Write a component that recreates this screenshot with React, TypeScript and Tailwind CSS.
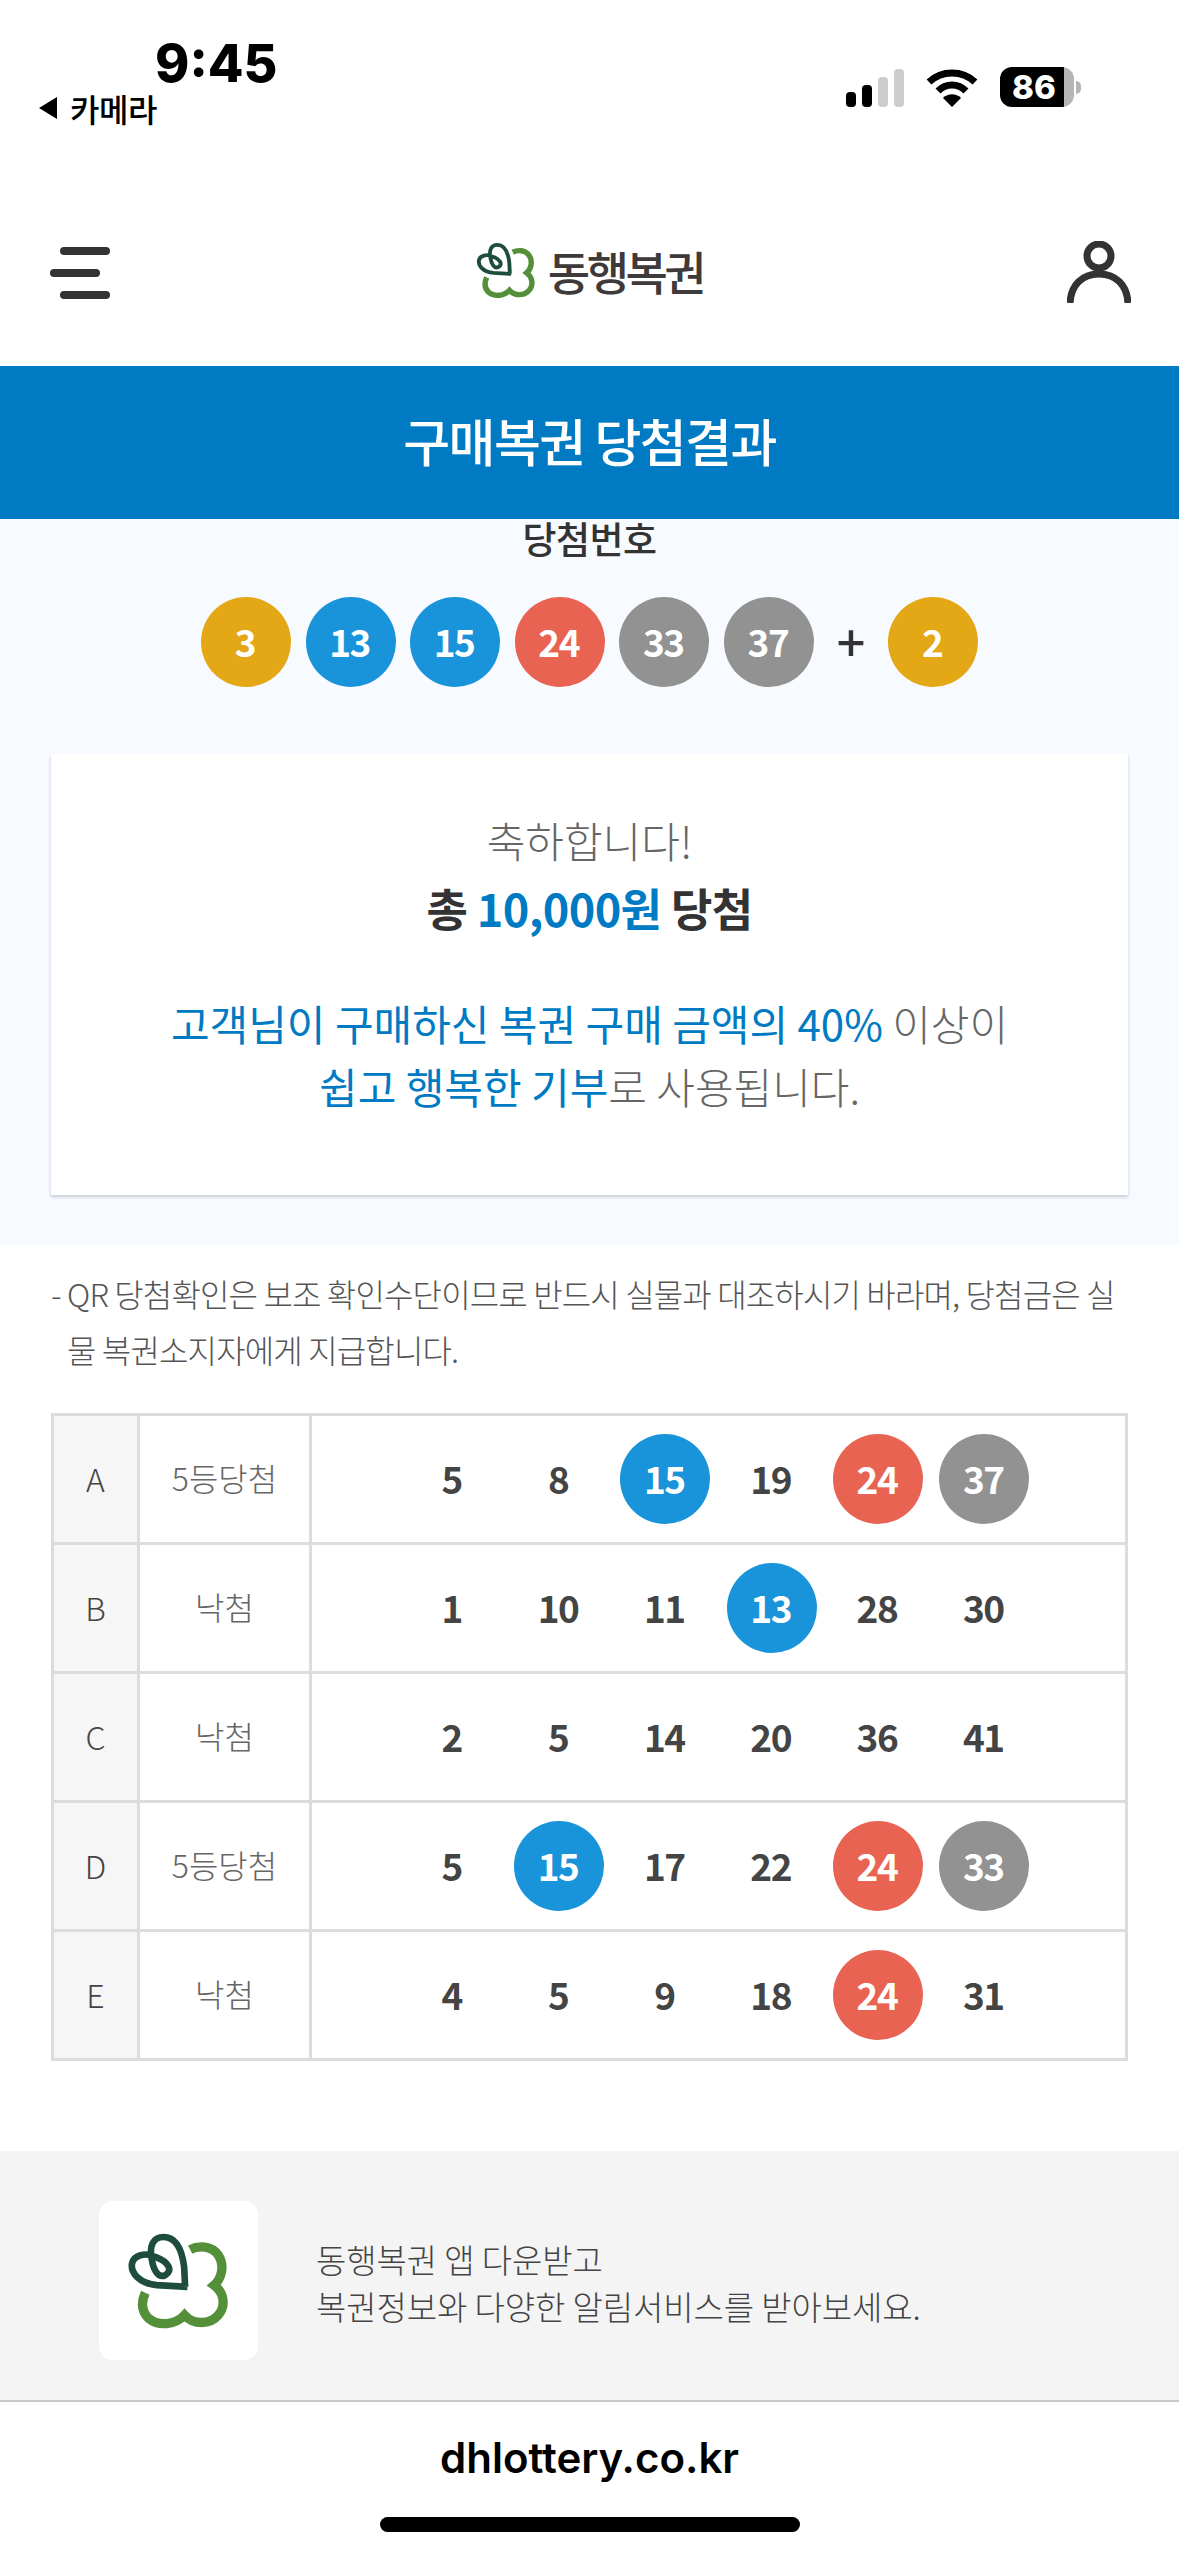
import React from "react";

const KR = "font-['Noto_Sans_CJK_KR','Noto_Sans',sans-serif]";

function Logo({ className }: { className: string }) {
  return (
    <svg viewBox="110 125 310 295" className={className} fill="none">
      <path d="M300 178C325 165 365 165 385 195C405 225 395 265 372 285C400 305 410 345 385 375C360 405 310 405 283 375C255 405 205 410 175 385C150 360 155 330 165 308" stroke="#54903a" strokeWidth="28" />
      <path d="M292 290L200 285C150 280 120 250 125 220C130 195 165 185 195 200C235 215 250 240 225 255C205 265 190 240 185 210C175 165 190 140 220 140C255 140 275 175 282 230L285 290" stroke="#1f4d3d" strokeWidth="20" strokeLinejoin="round" />
    </svg>
  );
}

function Ball({ n, color }: { n: number; color: string }) {
  return (
    <div className={`w-[90px] h-[90px] pr-[2px] rounded-full flex items-center justify-center text-white text-[37px] font-bold tracking-[-1.5px] shrink-0 ${color}`}>
      {n}
    </div>
  );
}

const ballColor = (n: number) =>
  n <= 10 ? "bg-[#e4a716]" : n <= 20 ? "bg-[#1994da]" : n <= 30 ? "bg-[#e96353]" : "bg-[#929292]";

const rows: { id: string; res: string; nums: number[]; hit: number[] }[] = [
  { id: "A", res: "5등당첨", nums: [5, 8, 15, 19, 24, 37], hit: [15, 24, 37] },
  { id: "B", res: "낙첨", nums: [1, 10, 11, 13, 28, 30], hit: [13] },
  { id: "C", res: "낙첨", nums: [2, 5, 14, 20, 36, 41], hit: [] },
  { id: "D", res: "5등당첨", nums: [5, 15, 17, 22, 24, 33], hit: [15, 24, 33] },
  { id: "E", res: "낙첨", nums: [4, 5, 9, 18, 24, 31], hit: [24] },
];

export default function App() {
  return (
    <div className={`w-[1179px] h-[2556px] bg-white overflow-hidden flex flex-col ${KR}`}>
      {/* status bar */}
      <div className="h-[140px] flex justify-between shrink-0">
        <div className="pl-[37px] pt-[36px] flex flex-col">
          <span className="pl-[118px] font-['Inter',sans-serif] font-extrabold text-[52px] leading-[56px] text-black">9:45</span>
          <span className="flex items-center gap-[11px] text-[32px] leading-[36px] font-medium text-black -mt-[2px] tracking-[-0.5px]">
            <svg width="22" height="24" viewBox="0 0 22 24"><path d="M20 1V23L2 12Z" fill="#000" /></svg>
            카메라
          </span>
        </div>
        <div className="pr-[98px] pt-[67px] flex items-start gap-[22px]">
          <svg width="58" height="38" viewBox="0 0 58 38" className="mt-[2px]">
            <rect x="0" y="23" width="10" height="15" rx="4" fill="#000" />
            <rect x="16" y="16" width="10" height="22" rx="4" fill="#000" />
            <rect x="32" y="8" width="10" height="30" rx="4" fill="#cdcdcd" />
            <rect x="48" y="0" width="10" height="38" rx="4" fill="#cdcdcd" />
          </svg>
          <svg width="52" height="38" viewBox="0 0 52 38" className="mt-[2px]">
            <path d="M3 13C16 1 36 1 49 13" stroke="#000" strokeWidth="7" fill="none" />
            <path d="M12 22C20 14 32 14 40 22" stroke="#000" strokeWidth="7" fill="none" />
            <path d="M17 29C22 24 30 24 35 29L26 38Z" fill="#000" />
          </svg>
          <div className="flex items-center">
            <div className="w-[74px] h-[40px] rounded-[12px] bg-[linear-gradient(90deg,#000_0,#000_64px,#b5b5b5_64px)] flex items-center pl-[12px] text-white font-['Inter',sans-serif] font-extrabold text-[33px] leading-none">
              86
            </div>
            <div className="w-[5px] h-[13px] rounded-r-full bg-[#b5b5b5] ml-[2px]" />
          </div>
        </div>
      </div>

      {/* nav */}
      <div className="h-[226px] shrink-0 flex items-start justify-between pt-[101px] pl-[50px] pr-[48px]">
        <div className="flex flex-col gap-[14px] items-start pt-[6px]">
          <div className="w-[50px] h-[8px] rounded-full bg-[#333] ml-[10px]" />
          <div className="w-[50px] h-[8px] rounded-full bg-[#333]" />
          <div className="w-[50px] h-[8px] rounded-full bg-[#333] ml-[10px]" />
        </div>
        <div className="flex items-center gap-[12px] ml-[2px]">
          <Logo className="w-[60px] h-[57px]" />
          <span className="text-[46px] leading-[58px] font-medium text-[#3e3a39] tracking-[-3.5px]">동행복권</span>
        </div>
        <svg width="64" height="62" viewBox="0 0 64 62" fill="none">
          <circle cx="32" cy="15" r="12" stroke="#333" strokeWidth="7" />
          <path d="M3 62C4 44 15 33 32 33C49 33 60 44 61 62" stroke="#333" strokeWidth="7" />
        </svg>
      </div>

      {/* title */}
      <div className="h-[153px] shrink-0 bg-[#007bc3] flex items-center justify-center text-white text-[51px] font-medium tracking-[-1.6px] pb-[4px]">
        구매복권 당첨결과
      </div>

      {/* winning numbers */}
      <div className="h-[726px] shrink-0 bg-[#f7faff] flex flex-col items-center">
        <div className="text-[37px] leading-[44px] font-medium text-[#333] -mt-[3px] mb-[1px] tracking-[-0.5px]">당첨번호</div>
        <div className="mt-[36px] flex items-center gap-[14.6px]">
          {[3, 13, 15, 24, 33, 37].map((n) => (
            <Ball key={n} n={n} color={ballColor(n)} />
          ))}
          <div className="w-[45px] text-center text-[50px] leading-none font-medium text-[#333] -mt-[4px]">+</div>
          <Ball n={2} color={ballColor(2)} />
        </div>
        <div className="mt-[67px] w-[1077px] h-[441px] bg-white shadow-[0_2px_3px_rgba(60,70,90,0.25)] flex flex-col items-center pt-[58px]">
          <div className="text-[42px] leading-[56px] font-light text-[#666]">축하합니다!</div>
          <div className="mt-[11px] text-[45px] leading-[58px] font-bold text-[#333] tracking-[-0.6px]">
            총 <span className="text-[#007bc3]">10,000원</span> 당첨
          </div>
          <div className="mt-[54px] text-[42px] leading-[63px] font-light text-[#666] text-center">
            <span className="text-[#007bc3] font-normal">고객님이 구매하신 복권 구매 금액의 40%</span> 이상이
            <br />
            <span className="text-[#007bc3] font-normal">쉽고 행복한 기부</span>로 사용됩니다.
          </div>
        </div>
      </div>

      {/* note */}
      <div className="pl-[67px] pr-[40px] pt-[20px] pb-[3px] text-[32px] leading-[56px] text-[#555] font-light -indent-[16px] tracking-[-0.85px]">
        - QR 당첨확인은 보조 확인수단이므로 반드시 실물과 대조하시기 바라며, 당첨금은 실
        <br />
        물 복권소지자에게 지급합니다.
      </div>

      {/* table */}
      <div className="mt-[33px] mx-[51px] w-[1077px] shrink-0 border-[3px] border-[#dcdcdc] flex flex-col">
        {rows.map((r, i) => (
          <div key={r.id} className={`flex ${i < rows.length - 1 ? "h-[129px] border-b-[3px] border-[#dcdcdc]" : "h-[126px]"}`}>
            <div className="w-[86px] shrink-0 bg-[#f6f6f6] border-r-[3px] border-[#dcdcdc] flex items-center justify-center text-[32px] font-light text-[#444] pb-[3px]">
              {r.id}
            </div>
            <div className="w-[172px] shrink-0 border-r-[3px] border-[#dcdcdc] flex items-center justify-center text-[32px] font-light text-[#666] pb-[5px]">
              {r.res}
            </div>
            <div className="flex-1 flex items-center justify-center gap-[16.3px]">
              {r.nums.map((n) =>
                r.hit.includes(n) ? (
                  <Ball key={n} n={n} color={ballColor(n)} />
                ) : (
                  <div key={n} className="w-[90px] pr-[2px] text-center text-[37px] font-bold tracking-[-1.5px] text-[#444]">
                    {n}
                  </div>
                )
              )}
            </div>
          </div>
        ))}
      </div>

      {/* footer promo */}
      <div className="mt-[90px] h-[251px] shrink-0 bg-[#f4f4f4] border-b-[2px] border-[#c8c8c8] flex items-center pl-[99px] gap-[58px]">
        <div className="w-[159px] h-[159px] rounded-[14px] bg-white flex items-center justify-center mt-[10px]">
          <Logo className="w-[103px] h-[98px]" />
        </div>
        <div className="text-[33px] leading-[47px] font-light text-[#444] mt-[14px] tracking-[-0.1px]">
          동행복권 앱 다운받고
          <br />
          복권정보와 다양한 알림서비스를 받아보세요.
        </div>
      </div>

      {/* browser bar */}
      <div className="flex-1 flex flex-col items-center">
        <div className="mt-[30px] text-[42px] leading-[52px] font-['Inter',sans-serif] font-semibold text-black">dhlottery.co.kr</div>
        <div className="mt-[33px] w-[420px] h-[15px] rounded-full bg-black" />
      </div>
    </div>
  );
}
